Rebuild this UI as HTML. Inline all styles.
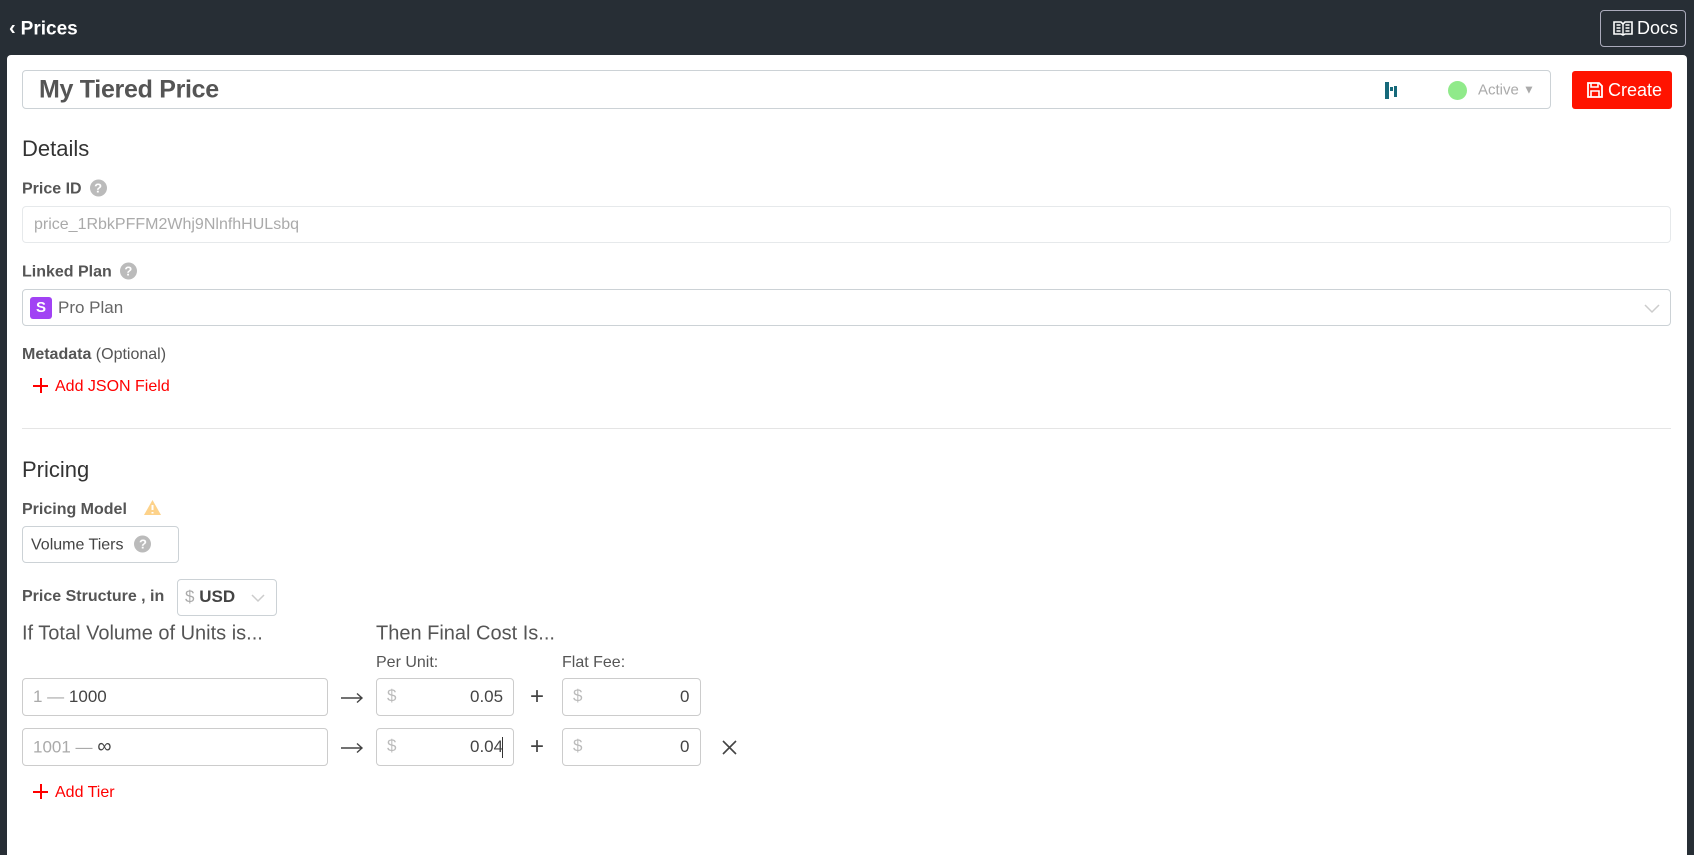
<!DOCTYPE html>
<html><head><meta charset="utf-8"><style>
*{box-sizing:border-box;margin:0;padding:0}
body{width:1694px;height:811px;overflow:hidden;background:#272e35;font-family:"Liberation Sans",sans-serif;color:#555;position:relative}
.a{position:absolute}
.panel{left:7px;top:55px;width:1680px;height:800px;background:#fff;border-radius:4px 4px 0 0}
.inp{position:absolute;border:1px solid #ccd2d6;border-radius:4px;background:#fff}
.lbl{position:absolute;font-weight:bold;font-size:16px;color:#555;transform:translateY(-50%)}
.h{position:absolute;font-size:22px;color:#333;transform:translateY(-50%)}
.q{display:inline-block;width:17px;height:17px;border-radius:50%;background:#bbb;color:#fff;font-size:13px;font-weight:bold;text-align:center;line-height:17px;vertical-align:1px;margin-left:8px}
.t{position:absolute;transform:translateY(-50%);white-space:nowrap}
.red{color:#f00}
.plus{display:inline-block;position:relative;width:15px;height:15px;vertical-align:-2px;margin-right:7px}
.plus:before{content:"";position:absolute;left:0;top:7px;width:15px;height:2px;background:#f00}
.plus:after{content:"";position:absolute;left:7px;top:0;width:2px;height:15px;background:#f00}
</style></head><body>
<div class="t" style="left:9px;top:29px;color:#fff;font-weight:bold;font-size:19px"><span style="font-size:20px;margin-right:5px">&#8249;</span>Prices</div>
<div class="a" style="left:1600px;top:10px;width:86px;height:37px;border:1px solid #aab;border-radius:4px;color:#fff;font-size:18px;line-height:35px;padding-left:12px">
<svg width="20" height="16" viewBox="0 0 20 16" style="vertical-align:-2px;margin-right:4px"><path d="M1 2h7l2 2 2-2h7v12h-7l-2 1-2-1H1z" fill="none" stroke="#fff" stroke-width="1.6"/><path d="M10 4v11M3.5 5h4M3.5 8h4M3.5 11h4M12.5 5h4M12.5 8h4M12.5 11h4" stroke="#fff" stroke-width="1.4"/></svg>Docs</div>
<div class="a panel"></div>
<div class="inp" style="left:22px;top:70px;width:1529px;height:39px"></div>
<div class="t" style="left:39px;top:90px;font-size:25px;font-weight:bold;color:#555;letter-spacing:-0.3px">My Tiered Price</div>
<div class="a" style="left:1385px;top:82px;width:4px;height:17px;background:#16697a"></div>
<div class="a" style="left:1390px;top:87px;width:3px;height:4px;background:#16697a"></div>
<div class="a" style="left:1394px;top:86px;width:3px;height:11px;background:#16697a"></div>
<div class="a" style="left:1448px;top:81px;width:19px;height:19px;border-radius:50%;background:#90ea8a"></div>
<div class="t" style="left:1478px;top:90px;font-size:15px;color:#aaa">Active <span style="font-size:12px;vertical-align:1px">&#9660;</span></div>
<div class="a" style="left:1572px;top:71px;width:100px;height:38px;background:#ff1300;border-radius:3px;color:#fff;font-size:18px;line-height:38px;padding-left:14px">
<svg width="18" height="18" viewBox="0 0 18 18" style="vertical-align:-3px;margin-right:4px"><path d="M2 2h11l3 3v11H2z" fill="none" stroke="#fff" stroke-width="1.8"/><path d="M5 2v4h7V2M5 16v-6h8v6" fill="none" stroke="#fff" stroke-width="1.6"/></svg>Create</div>

<div class="h" style="left:22px;top:149px">Details</div>
<div class="lbl" style="left:22px;top:189px">Price ID<span class="q">?</span></div>
<div class="inp" style="left:22px;top:206px;width:1649px;height:37px;border-color:#e6e9eb"></div>
<div class="t" style="left:34px;top:225px;font-size:16px;color:#aaa">price_1RbkPFFM2Whj9NlnfhHULsbq</div>
<div class="lbl" style="left:22px;top:272px">Linked Plan<span class="q">?</span></div>
<div class="inp" style="left:22px;top:289px;width:1649px;height:37px"></div>
<div class="a" style="left:30px;top:297px;width:22px;height:22px;background:#a142f4;border-radius:3px;color:#fff;font-weight:bold;font-size:15px;text-align:center;line-height:22px">S</div>
<div class="t" style="left:58px;top:308px;font-size:17px;color:#666">Pro Plan</div>
<svg class="a" style="left:1643px;top:302px" width="18" height="12" viewBox="0 0 18 12"><path d="M2 3l7 7 7-7" fill="none" stroke="#ccc" stroke-width="1.5"/></svg>
<div class="lbl" style="left:22px;top:355px">Metadata <span style="font-weight:normal">(Optional)</span></div>
<div class="t red" style="left:33px;top:387px;font-size:16px"><span class="plus"></span>Add JSON Field</div>
<div class="a" style="left:22px;top:428px;width:1649px;height:1px;background:#e5e5e5"></div>

<div class="h" style="left:22px;top:470px">Pricing</div>
<div class="lbl" style="left:22px;top:509px">Pricing Model <svg width="19" height="17" viewBox="0 0 19 17" style="vertical-align:-2px;margin-left:12px"><path d="M9.5 1L18 16H1z" fill="#fdd28a"/><path d="M9.5 6v5M9.5 13v1.5" stroke="#fff" stroke-width="2"/></svg></div>
<div class="inp" style="left:22px;top:526px;width:157px;height:37px"></div>
<div class="t" style="left:31px;top:545px;font-size:16px;color:#444">Volume Tiers<span class="q" style="margin-left:11px">?</span></div>
<div class="lbl" style="left:22px;top:597px">Price Structure , in</div>
<div class="inp" style="left:177px;top:579px;width:100px;height:37px"></div>
<div class="t" style="left:185px;top:597px;font-size:17px"><span style="color:#aaa">$</span> <b style="color:#444">USD</b></div>
<svg class="a" style="left:250px;top:593px" width="16" height="10" viewBox="0 0 16 10"><path d="M2 2l6 6 6-6" fill="none" stroke="#ccc" stroke-width="1.5"/></svg>
<div class="t" style="left:22px;top:634px;font-size:20px;color:#555">If Total Volume of Units is...</div>
<div class="t" style="left:376px;top:634px;font-size:20px;color:#555">Then Final Cost Is...</div>
<div class="t" style="left:376px;top:663px;font-size:16px">Per Unit:</div>
<div class="t" style="left:562px;top:663px;font-size:16px">Flat Fee:</div>

<div class="inp" style="left:22px;top:678px;width:306px;height:38px;border-color:#ccc"></div>
<div class="t" style="left:33px;top:697px;font-size:17px"><span style="color:#aaa">1 — </span><span style="color:#444">1000</span></div>
<svg class="a" style="left:340px;top:692px" width="24" height="12" viewBox="0 0 24 12"><path d="M1 6h21M17 1.5l5 4.5-5 4.5" fill="none" stroke="#444" stroke-width="1.4"/></svg>
<div class="inp" style="left:376px;top:678px;width:138px;height:38px;border-color:#ccc"></div>
<div class="t" style="left:387px;top:696px;font-size:17px;color:#bbb">$</div>
<div class="t" style="left:470px;top:697px;font-size:17px;color:#444">0.05</div>
<div class="t" style="left:530px;top:697px;font-size:24px;color:#444">+</div>
<div class="inp" style="left:562px;top:678px;width:139px;height:38px;border-color:#ccc"></div>
<div class="t" style="left:573px;top:696px;font-size:17px;color:#bbb">$</div>
<div class="t" style="left:680px;top:697px;font-size:17px;color:#444">0</div>

<div class="inp" style="left:22px;top:728px;width:306px;height:38px;border-color:#ccc"></div>
<div class="t" style="left:33px;top:747px;font-size:17px"><span style="color:#aaa">1001 — </span><span style="color:#444;font-size:20px">∞</span></div>
<svg class="a" style="left:340px;top:742px" width="24" height="12" viewBox="0 0 24 12"><path d="M1 6h21M17 1.5l5 4.5-5 4.5" fill="none" stroke="#444" stroke-width="1.4"/></svg>
<div class="inp" style="left:376px;top:728px;width:138px;height:38px;border-color:#ccc"></div>
<div class="t" style="left:387px;top:746px;font-size:17px;color:#bbb">$</div>
<div class="t" style="left:470px;top:747px;font-size:17px;color:#444">0.04</div>
<div class="a" style="left:502px;top:737px;width:1px;height:21px;background:#333"></div>
<div class="t" style="left:530px;top:747px;font-size:24px;color:#444">+</div>
<div class="inp" style="left:562px;top:728px;width:139px;height:38px;border-color:#ccc"></div>
<div class="t" style="left:573px;top:746px;font-size:17px;color:#bbb">$</div>
<div class="t" style="left:680px;top:747px;font-size:17px;color:#444">0</div>
<svg class="a" style="left:722px;top:740px" width="15" height="15" viewBox="0 0 15 15"><path d="M1 1l13 13M14 1L1 14" stroke="#444" stroke-width="1.6"/></svg>
<div class="t red" style="left:33px;top:793px;font-size:16px"><span class="plus"></span>Add Tier</div>
</body></html>
